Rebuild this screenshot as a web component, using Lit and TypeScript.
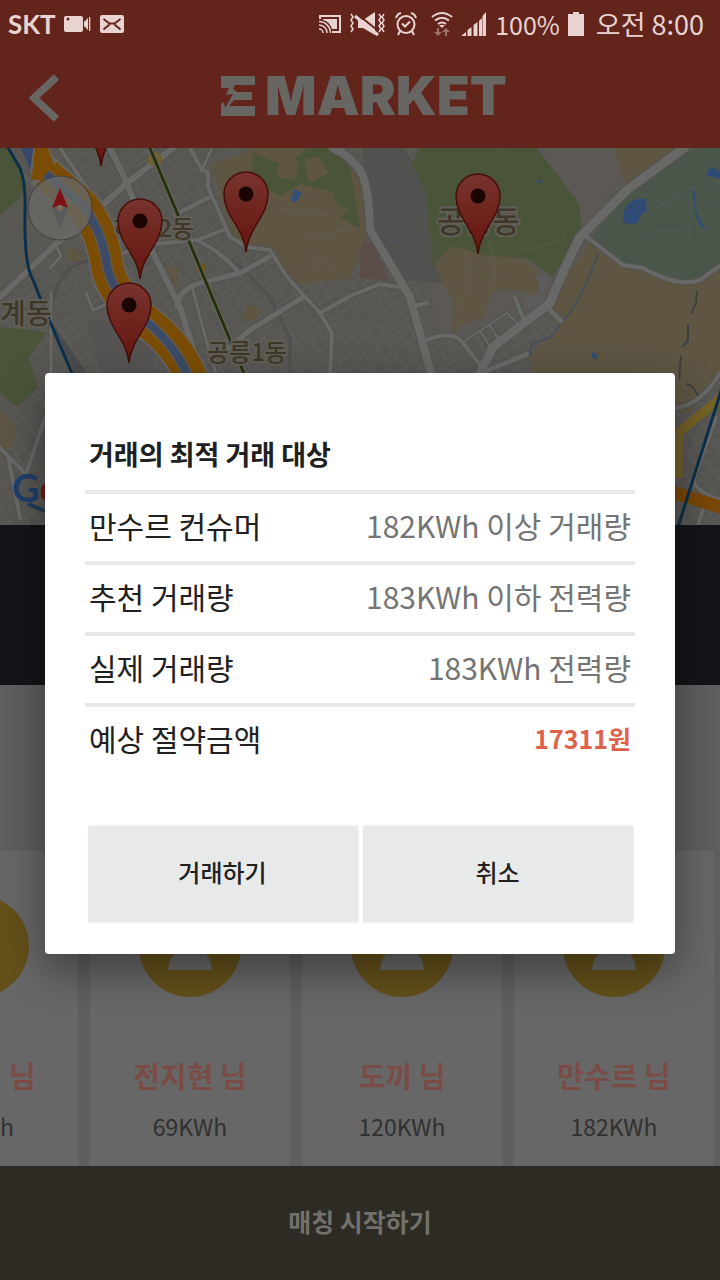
import { LitElement, html, css, svg } from "lit";
import { customElement } from "lit/decorators.js";

@customElement("status-bar")
class StatusBar extends LitElement {
  static styles = css`
    :host { display: flex; justify-content: space-between; align-items: center; height: 48px; padding: 0 16px 0 8px; color: #e8d3d1; font-size: 25px; line-height: 32px; }
    .group { display: flex; align-items: center; gap: 8px; }
    .carrier { font-family: Lato, sans-serif; font-weight: 700; font-size: 26px; }
    svg { display: block; fill: currentColor; }
    .line { fill: none; stroke: currentColor; stroke-width: 2; }
    .thin { stroke-width: 1.5; }
    .thick { stroke-width: 3; }
    .dim { opacity: .45; }
    .cut { fill: none; stroke: #63241c; stroke-width: 2; }
    .time { font-size: 27px; margin-left: 4px; }
  `;
  render() {
    return html`
      <div class="group">
        <span class="carrier">SKT</span>
        <svg width="28" height="24" viewBox="0 0 28 24"><path d="M2 4h15q2 0 2 2v12q0 2-2 2H2q-2 0-2-2V6q0-2 2-2zM20 10l4-4v12l-4-4zM25 5h1.300v14H25z"/><circle cx="4" cy="7" r="1.500" fill="#63241c"/></svg>
        <svg width="24" height="24" viewBox="0 0 24 24"><rect y="3" width="24" height="18" rx="2"/><path class="cut" d="M3.500 7l6 4.500h5L20.500 7M3.500 17.500l6-5M20.500 17.500l-6-5"/></svg>
      </div>
      <div class="group">
        <svg width="22" height="24" viewBox="0 0 22 24"><path class="line" d="M1 7V4h20v16h-8"/><path class="line thin" d="M0 17a4 4 0 0 1 4 4M0 13a8 8 0 0 1 8 8M0 9.500a11.500 11.500 0 0 1 11.500 11.500"/><path d="M4 7h14v10h-5Q11 10 4 8z"/></svg>
        <svg width="38" height="26" viewBox="0 0 38 26"><path d="M9 9h5l12-8v23l-12-7H9z"/><path class="cut thick" d="M8 3l24 19"/><path class="line thick" d="M6 5l23 19"/><path class="line thin" d="M2 3l2 3-2 3 2 3-2 3 2 3-2 3M30 3l2 3-2 3 2 3-2 3 2 3-2 3M35 3l-2 3 2 3-2 3 2 3-2 3 2 3"/></svg>
        <svg width="22" height="26" viewBox="0 0 22 26"><circle class="line" cx="11" cy="13.500" r="8.500"/><path class="line" d="M1 7Q2 3 6 2M21 7Q20 3 16 2M5 20l-2 4M17 20l2 4M7 12.500l3 3 5-5"/></svg>
        <svg width="28" height="26" viewBox="0 0 28 26"><path class="line" d="M7 6q10-8 20 0M10 9.500q7-5.500 14 0M13 13q4-3 8 0"/><path d="M14 14h6l-3 3z"/><path class="dim" d="M12 17h2v4h3l-4 4-4-4h3zM20 25h2v-4h3l-4-4-4 4h3z"/></svg>
        <svg width="26" height="26" viewBox="0 0 26 26"><path d="M0 25l5-4v4zM6.500 25v-6l4-3v9zM12.500 25V14l4-3v14zM18 25V10l3-3v18zM21.500 25V5l3.500-4v24z"/></svg>
        <span>100%</span>
        <svg width="16" height="24" viewBox="0 0 16 24"><path d="M5 0h6v2h5v22H0V2h5z"/></svg>
        <span class="time">오전 8:00</span>
      </div>`;
  }
}

@customElement("app-header")
class AppHeader extends LitElement {
  static styles = css`
    :host { display: grid; grid-template-columns: 40px 1fr 32px; align-items: center; height: 100px; box-sizing: border-box; padding: 0 29px 4px; color: #686663; }
    .back { padding: 4px 0 0; border: 0; background: none; color: inherit; }
    svg { display: block; }
    .logo { display: flex; justify-content: center; align-items: center; gap: 10px; margin: 0; font: 900 54px/60px Inter, sans-serif; }
  `;
  render() {
    return html`
      <button class="back" aria-label="뒤로"><svg width="32" height="48" viewBox="0 0 32 48"><path d="M27.500 3L5 24l22.500 21" fill="none" stroke="currentColor" stroke-width="7.500"/></svg></button>
      <h1 class="logo"><svg width="34" height="40" viewBox="0 0 34 40" fill="currentColor"><path d="M0 0h34v9H14l-2 4 4 3h15v8H13l-5 6h26v10H0V28l3-2 1 6 8-14-7 1 3-7H0z"/></svg><span>MARKET</span></h1>`;
  }
}

const roads: [string, number][] = [
  ["M110 0L127 35L153 105L180 159L202 229", 6],
  ["M173 0L127 35L97 62L57 95L0 149", 6],
  ["M190 0L202 22L208 24L208 39L230 89L247 99L270 102L287 129L320 165L332 185L330 229", 4],
  ["M60 0L97 55", 4],
  ["M202 22L212 0", 3],
  ["M180 64L210 49", 4],
  ["M120 106L153 96L197 92L223 82", 4],
  ["M197 92Q220 103 240 125", 4],
  ["M177 159Q178 142 200 135L240 125L269 109", 5],
  ["M225 203L250 182L302 150", 5],
  ["M193 142Q205 190 217 229", 3],
  ["M333 0Q350 8 360 22Q369 36 370 82L410 149L432 229", 8],
  ["M320 165L350 148L380 136L398 139", 4],
  ["M410 159L427 155", 4],
  ["M684 0L627 42L580 89Q562 125 550 155L493 199L478 229", 9],
  ["M587 89L623 117L643 120Q678 140 700 132L720 118", 4],
  ["M427 192Q452 181 463 195L480 217", 4],
  ["M463 194L507 165L518 176M481 184L491 200M490 178L500 193", 2],
  ["M515 150L525 175", 4],
  ["M550 162L561 173", 5],
  ["M484 224L527 206", 5],
  ["M50 120L61 108L55 95", 3],
  ["M51 145L51 229", 3],
  ["M86 145L93 162L107 156", 3],
  ["M45 270L26 326L0 300M8 308L20 370", 4],
  ["M675 260Q700 258 720 225M716 270L694 330Q692 342 720 352M698 377L706 352", 4]
];

const pins = [[101, -40], [140, 73], [246, 46], [129, 157], [478, 48]];

@customElement("city-map")
class CityMap extends LitElement {
  static styles = css`
    :host { display: block; height: 377px; overflow: hidden; background: #575653; }
    svg { display: block; width: 100%; height: 100%; font-family: "Noto Sans CJK KR", sans-serif; font-weight: 500; }
    .edge { fill: none; stroke: #53524f; }
    .road { fill: none; stroke: #686867; stroke-linejoin: round; stroke-linecap: round; }
    .green { fill: #4a5439; }
    .tan { fill: #5e5643; }
    .label { fill: #3f3727; stroke: #605e57; stroke-width: 4; paint-order: stroke; }
    .google { font-family: Lato, sans-serif; font-weight: 700; }
  `;
  render() {
    return html`<svg viewBox="0 0 720 377" preserveAspectRatio="xMidYMid slice" role="img" aria-label="지도">
      <defs>
        <pattern id="blocks" width="26" height="20" patternUnits="userSpaceOnUse" patternTransform="rotate(-32)"><path d="M0 1H26M0 8H18M7 1V20M18 1V20M0 14H7M18 13H26" fill="none" stroke="#5f5e5a" stroke-width="1"/></pattern>
        <linearGradient id="pin" x1="0" y1="0" x2="0" y2="1"><stop offset="0" stop-color="#78332d"/><stop offset="1" stop-color="#65150e"/></linearGradient>
      </defs>
      <rect width="720" height="377" fill="#575653"/>
      <rect width="720" height="377" fill="url(#blocks)"/>
      <path d="M0 67L22 48L45 95L0 149Z" fill="#5a5853"/>
      <path d="M524 0H640L580 89L550 160L440 190L420 90Z" fill="#5c5955"/>
      <path d="M362 0H403Q420 20 427 48L438 119L442 135L400 132L370 82Z" fill="#51514f"/>
      <path d="M360 92L372 95L390 133L360 130Z" fill="#5b4c48"/>
      <path class="green" d="M0 0H8L22 25V48L0 67ZM0 179L47 184L29 209L38 240L17 259L0 245Z"/>
      <path d="M86 172L101 225H150L160 190L140 170Z" fill="#555452"/>
      <path d="M0 310Q22 290 14 275L0 262Z" class="tan"/>
      <path class="tan" d="M212 16L256 0H333L367 40L369 82L350 130L300 136L290 128L270 102L244 99L229 80ZM68 99L82 102L80 115L67 112ZM165 117L179 120L176 142L163 139ZM247 156L262 161L255 173L243 171Z"/>
      <path class="green" d="M253 5L274 14L295 11L308 0H333L350 20L360 80L342 71L333 44L300 36L281 48L252 34ZM237 47L257 55L251 82L239 79Z"/>
      <path class="tan" d="M279 8L298 12L296 32L277 29ZM304 12L318 8L329 25L309 35ZM334 57L349 61L343 68Z"/>
      <path d="M294 41L301 45L298 53L291 54Z" fill="#314e7b"/>
      <path class="green" d="M420 0H537L580 57L581 87L553 129L526 110H485L433 119L427 48L412 15Z"/>
      <path class="tan" d="M434 117L452 98L487 108L524 110L539 124V150Q520 138 492 144L482 170L459 178L452 188L454 155Z"/>
      <path d="M536 126L552 130L541 146ZM526 150L538 145L550 148L542 160L529 164Z" fill="#5d5b5c"/>
      <path d="M613 0H684L627 40Z" class="tan"/>
      <path d="M693 0H720V118L695 135L643 120L623 117L590 90L630 45Z" fill="#4a564a"/>
      <path class="tan" d="M590 95L623 117L643 120Q678 140 700 132L720 118V225L690 265L540 250L528 210L560 180L548 158Z"/>
      <g fill="none" stroke="#545f55"><path d="M625 84Q650 60 665 55L695 38M640 100Q660 70 690 90M685 13L710 38L720 34M655 50L690 82"/><path d="M500 0Q530 20 545 55L565 88M565 90Q535 102 510 104" stroke="#555c45"/><path d="M466 100L467 144L455 165M489 92L495 118L494 140M307 89L355 80M310 105L320 125M280 60L330 68M322 110L340 126" stroke="#625e50"/></g>
      <path d="M623 66Q627 54 636 51L646 51L647 63L640 68Q640 74 635 76L623 75ZM708 22L712 19L720 23V31L706 27ZM692 41Q697 44 695 58Q697 70 706 81Q697 79 695 62ZM538 32L543 33L539 36ZM592 204L598 207L595 212L591 208ZM393 89L397 95L393 92Z" fill="#314b77"/>
      <path d="M598 105Q583 150 565 170L550 190L532 195L530 208" fill="none" stroke="#454f5a" stroke-width="2"/>
      <path d="M697 143L696 155L691 166M688 176V193L682 199M681 208L679 232M686 236L692 238L702 253" fill="none" stroke="#3d4040" stroke-width="2"/>
      <path d="M52 175Q50 120 90 112M197 92L245 122L270 150L290 190V229" fill="none" stroke="#4f4f4f" stroke-width="3"/>
      <path d="M52 175L90 229H76Z" fill="#4b4b4d"/>
      ${roads.map(([d, w]) => svg`<path class="edge" d=${d} stroke-width=${w + 2}></path>`)}
      ${roads.map(([d, w]) => svg`<path class="road" d=${d} stroke-width=${w}></path>`)}
      <path d="M20 -2H34L32 25Z" fill="#37486b"/>
      <path d="M42 -5L38 27M40 -2L50 22L83 58Q103 84 107 118Q112 146 147 174Q182 200 194 238" fill="none" stroke="#676560" stroke-width="16"/>
      <path d="M42 22L83 58Q103 84 107 118Q112 146 147 174Q182 200 194 238" fill="none" stroke="#676560" stroke-width="35"/>
      <path d="M42 -5L38 32M40 -2L50 24" fill="none" stroke="#7b4d04" stroke-width="13"/>
      <path d="M46 26L83 58Q103 84 107 118Q112 146 147 174Q182 200 194 238" fill="none" stroke="#7b4d04" stroke-width="32"/>
      <path d="M46 26L83 58Q103 84 107 118Q112 146 147 174Q176 198 190 232" fill="none" stroke="#675a45" stroke-width="11"/>
      <path d="M46 26L83 58Q103 84 107 118Q112 146 147 174Q176 198 190 232" fill="none" stroke="#3b4b68" stroke-width="8"/>
      <path d="M722 249L678 285V330" fill="none" stroke="#746326" stroke-width="9"/>
      <path d="M668 343L724 360" fill="none" stroke="#794708" stroke-width="13"/>
      <path d="M7 -2L20 20Q26 35 25 65Q24 117 33 132L43 157L76 235M722 240L678 379" fill="none" stroke="#0b304b" stroke-width="3"/>
      <path d="M28 356L45 363" stroke="#243c59" stroke-width="4"/>
      <circle cx="155" cy="11" r="7" fill="#71602b"/><circle cx="201" cy="120" r="5" fill="#705023"/>
      <path d="M149 -2L178 67L248 235" fill="none" stroke="#69695e" stroke-width="5"/>
      <path d="M149 -2L178 67L248 235" fill="none" stroke="#25310f" stroke-width="3"/>
      <text class="label" x="114" y="89" font-size="24">하계2동</text>
      <text class="label" x="437" y="84" font-size="30">공릉동</text>
      <text class="label" x="207" y="213" font-size="24">공릉1동</text>
      <text class="label" x="0" y="176" font-size="28">계동</text>
      <text class="google" x="12" y="354" font-size="38"><tspan fill="#1f3f6d">G</tspan><tspan fill="#6b1a14">o</tspan></text>
      <circle cx="60" cy="60" r="32" fill="#686865" fill-opacity=".8" stroke="#3f3f3e"/>
      <path d="M60 40L68 60L60 57L52 60Z" fill="#7e1114"/><path d="M52 60L60 57L68 60L60 80Z" fill="#5a5a5d"/><circle cx="60" cy="60" r="3" fill="#806b5a"/>
      ${pins.map(([x, y]) => svg`<g transform="translate(${x} ${y})"><path d="M0 58C-2 34-22 22-22 0A22 22 0 0 1 22 0C22 22 2 34 0 58Z" fill="url(#pin)" stroke="#460d09" stroke-width="1.500"></path><circle r="7.500" fill="#1b0503"></circle></g>`)}
    </svg>`;
  }
}

@customElement("consumer-list")
class ConsumerList extends LitElement {
  static styles = css`
    :host { display: flex; justify-content: flex-end; gap: 12px; height: 315px; padding-right: 6px; overflow: hidden; background: #5f5f5f; }
    .card { flex: 0 0 200px; display: flex; flex-direction: column; align-items: center; box-sizing: border-box; padding-top: 44px; background: #676767; }
    .peek { flex: 1 0 78px; align-items: flex-start; overflow: hidden; }
    .avatar { display: block; flex: none; width: 102px; height: 102px; }
    .peek .avatar { margin-left: -73px; }
    .name { margin: 60px 0 18px; font-size: 29px; line-height: 36px; font-weight: 700; color: #7b4b46; }
    .peek .name { padding-left: 9px; }
    .power { margin: 0; font-size: 23px; line-height: 30px; color: #303030; }
  `;
  card(name: string, power: string, peek = false) {
    return html`<article class="card ${peek ? "peek" : ""}">
      <svg class="avatar" viewBox="0 0 102 102"><circle cx="51" cy="51" r="51" fill="#63501a"/><circle cx="51" cy="36" r="14" fill="#676767"/><path d="M29 75C31 44 71 44 73 75Z" fill="#676767"/></svg>
      <h2 class="name">${name}</h2><p class="power">${power}</p>
    </article>`;
  }
  render() {
    return html`${this.card("님", "h", true)}${this.card("전지현 님", "69KWh")}${this.card("도끼 님", "120KWh")}${this.card("만수르 님", "182KWh")}`;
  }
}

@customElement("trade-dialog")
class TradeDialog extends LitElement {
  static styles = css`
    :host { display: block; box-sizing: border-box; width: 100%; padding: 50px 40px 32px; border-radius: 4px; background: #fff; color: #202020; box-shadow: 0 16px 44px rgba(0, 0, 0, .4); }
    .row { display: flex; justify-content: space-between; align-items: center; box-sizing: border-box; height: 71px; padding: 0 4px 4px; font-size: 30px; line-height: 40px; border-bottom: 4px solid #e8eaea; }
    .row:last-child { border-bottom-color: transparent; }
    .title { margin: 0; font-size: 27px; font-weight: 700; }
    .list, .value { margin: 0; }
    .value { color: #747474; }
    .total { color: #e0614b; font-size: 25px; font-weight: 700; }
    .actions { display: grid; grid-template-columns: 1fr 1fr; gap: 6px; margin: 48px 3px 0; }
    .action { height: 96px; padding: 0 6px 4px; border: 0; background: #e8eaea; color: #202020; font: 500 24px/32px "Noto Sans CJK KR", sans-serif; box-shadow: 1px 0 2px rgba(0, 0, 0, .15); }
  `;
  render() {
    const rows = [["만수르 컨슈머", "182KWh 이상 거래량"], ["추천 거래량", "183KWh 이하 전력량"], ["실제 거래량", "183KWh 전력량"], ["예상 절약금액", "17311원"]];
    return html`
      <h2 class="row title">거래의 최적 거래 대상</h2>
      <dl class="list">${rows.map(([k, v], i) => html`<div class="row"><dt>${k}</dt><dd class="value ${i === 3 ? "total" : ""}">${v}</dd></div>`)}</dl>
      <div class="actions"><button class="action">거래하기</button><button class="action">취소</button></div>`;
  }
}

@customElement("app-root")
class AppRoot extends LitElement {
  static styles = css`
    :host { position: relative; display: flex; flex-direction: column; min-height: 100vh; overflow: hidden; background: #5f5f5f; font-family: "Noto Sans CJK KR", sans-serif; }
    .top { background: #63241c; }
    .banner { height: 160px; background: #13151a; }
    .space { flex: 1 0 166px; }
    .start { height: 114px; padding: 0 6px 4px; border: 0; background: #2e2a24; color: #72716c; font: 700 25px/36px "Noto Sans CJK KR", sans-serif; }
    .overlay { position: absolute; inset: 46px 0 0; display: flex; align-items: center; padding: 0 45px; }
  `;
  render() {
    return html`
      <div class="top"><status-bar></status-bar><app-header></app-header></div>
      <city-map></city-map>
      <div class="banner"></div>
      <div class="space"></div>
      <consumer-list></consumer-list>
      <button class="start">매칭 시작하기</button>
      <div class="overlay"><trade-dialog role="dialog" aria-modal="true"></trade-dialog></div>`;
  }
}
